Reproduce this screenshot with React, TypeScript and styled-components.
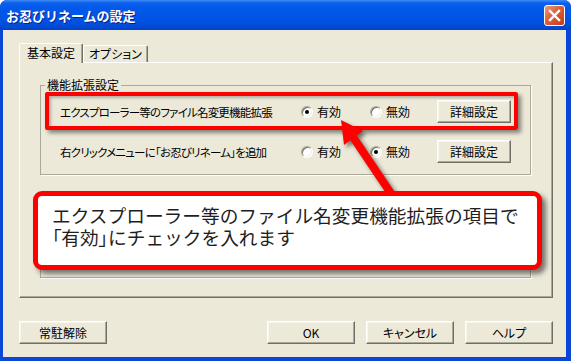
import React from "react";
import styled, { createGlobalStyle } from "styled-components";

const GlobalStyle = createGlobalStyle`
  html, body {
    margin: 0;
    padding: 0;
    background: #ffffff;
  }
  * {
    box-sizing: border-box;
  }
`;

const uiFont = `"Noto Sans CJK JP", "Noto Sans", sans-serif`;

export const Window = styled.div`
  position: relative;
  width: 571px;
  height: 361px;
  display: flex;
  flex-direction: column;
  background: #0b47d6;
  border-radius: 7px 7px 0 0;
  overflow: hidden;
  font-family: ${uiFont};
`;

export const TitleBar = styled.div`
  height: 30px;
  display: flex;
  align-items: center;
  padding: 0 6px 0 6px;
  background: linear-gradient(
    to bottom,
    #3d8df5 0px,
    #0b5fec 3px,
    #0058e9 10px,
    #0054e3 20px,
    #004bd8 26px,
    #0042c6 30px
  );
`;

export const TitleText = styled.div`
  color: #ffffff;
  font-size: 13px;
  font-weight: bold;
  letter-spacing: 0;
  text-shadow: 1px 1px 0 #0a1e8c;
`;

export const CloseBtn = styled.div`
  margin-left: auto;
  width: 21px;
  height: 21px;
  border: 1px solid #ffffff;
  border-radius: 3px;
  background: linear-gradient(135deg, #ec9a7c 0%, #dd5f37 45%, #c23c16 100%);
  display: flex;
  align-items: center;
  justify-content: center;
`;

export const Client = styled.div`
  flex: 1;
  margin: 0 5px 4px 3px;
  background: #ece9d8;
  padding: 13px 13px 13px 16px;
  display: flex;
  flex-direction: column;
`;

export const TabStrip = styled.div`
  display: flex;
  align-items: flex-end;
  height: 20px;
  margin-bottom: -1px;
  position: relative;
  z-index: 1;
`;

export const Tab = styled.div<{ $active?: boolean }>`
  height: ${(p) => (p.$active ? "20px" : "17px")};
  margin-bottom: ${(p) => (p.$active ? "0" : "1px")};
  padding: ${(p) => (p.$active ? "1px 7px 0 7px" : "0 5px 0 5px")};
  background: #ece9d8;
  border-top: 1px solid #ffffff;
  border-left: 1px solid #ffffff;
  border-right: 1px solid #716f64;
  box-shadow: inset -1px 0 0 #aca899;
  border-radius: 2px 2px 0 0;
  font-size: 12px;
  line-height: 16px;
  color: #000000;
  font-feature-settings: "palt";
`;

export const Panel = styled.div`
  flex: 1;
  display: flex;
  flex-direction: column;
  border: 1px solid;
  border-color: #ffffff #716f64 #716f64 #ffffff;
  box-shadow: inset -1px -1px 0 #aca899;
  padding: 14px 21px 19px 20px;
`;

export const Group = styled.fieldset<{ $grow?: boolean }>`
  margin: 0;
  border: 1px solid #aca899;
  box-shadow: 1px 1px 0 #ffffff;
  padding: 0;
  min-width: 0;
  ${(p) => (p.$grow ? "flex: 1; margin-top: 19px;" : "")}
`;

export const Legend = styled.legend`
  margin-left: 4px;
  padding: 0 2px;
  font-size: 12px;
  line-height: 16px;
  color: #000000;
`;

export const Rows = styled.div`
  display: flex;
  flex-direction: column;
  gap: 17px;
  padding: 7px 19px 11px 19px;
`;

export const Row = styled.div`
  display: grid;
  grid-template-columns: 1fr 69px 67px 74px;
  align-items: center;
  height: 23px;
  font-size: 12px;
  color: #000000;
`;

export const RowLabel = styled.span`
  font-size: 11.5px;
  letter-spacing: -0.8px;
  font-feature-settings: "palt";
  white-space: nowrap;
`;

export const RadioOption = styled.label`
  display: flex;
  align-items: center;
  gap: 4px;
`;

export const RadioCircle = styled.span<{ $checked?: boolean }>`
  position: relative;
  width: 12px;
  height: 12px;
  border-radius: 50%;
  background: #ffffff;
  border: 1px solid;
  border-color: #aca899 #ffffff #ffffff #aca899;
  box-shadow: inset 1px 1px 0 #716f64, inset -1px -1px 0 #f1efe2;
  &::after {
    content: "";
    display: ${(p) => (p.$checked ? "block" : "none")};
    position: absolute;
    left: 3px;
    top: 3px;
    width: 4px;
    height: 4px;
    border-radius: 50%;
    background: #000000;
  }
`;

export const Button = styled.div<{ $w?: number }>`
  width: ${(p) => p.$w ?? 74}px;
  height: 23px;
  display: flex;
  align-items: center;
  justify-content: center;
  background: #ece9d8;
  border: 1px solid;
  border-color: #ffffff #716f64 #716f64 #ffffff;
  box-shadow: inset -1px -1px 0 #aca899, inset 1px 1px 0 #f6f5ee;
  font-size: 12px;
  color: #000000;
  font-feature-settings: "palt";
`;

export const ButtonBar = styled.div`
  display: flex;
  align-items: center;
  margin-top: 23px;
  gap: 11px;
`;

export const Spacer = styled.div`
  flex: 1;
`;

export const Highlight = styled.div`
  position: absolute;
  left: 45px;
  top: 92px;
  width: 473px;
  height: 38px;
  border: 4px solid #ff0000;
  border-radius: 2px;
  box-shadow: 3px 3px 4px rgba(0, 0, 0, 0.45),
    inset 2px 2px 3px rgba(0, 0, 0, 0.25);
  z-index: 5;
`;

export const ArrowLayer = styled.svg`
  position: absolute;
  left: 0;
  top: 0;
  width: 571px;
  height: 361px;
  pointer-events: none;
  filter: drop-shadow(3px 3px 2px rgba(0, 0, 0, 0.5));
  z-index: 6;
`;

export const Callout = styled.div`
  position: absolute;
  left: 33px;
  top: 191px;
  width: 509px;
  height: 79px;
  border: 5px solid #ff0000;
  border-radius: 9px;
  background: #ffffff;
  box-shadow: 4px 4px 5px rgba(0, 0, 0, 0.5);
  padding: 8px 0 0 14px;
  font-size: 18.7px;
  line-height: 22px;
  color: #1e1e1e;
  white-space: nowrap;
  z-index: 7;
`;

export const Quote = styled.span`
  font-feature-settings: "palt";
`;

type RowInfo = { label: string; on: boolean };

const rows: RowInfo[] = [
  { label: "エクスプローラー等のファイル名変更機能拡張", on: true },
  { label: "右クリックメニューに「お忍びリネーム」を追加", on: false },
];

const SettingRow: React.FC<RowInfo> = ({ label, on }) => (
  <Row>
    <RowLabel>{label}</RowLabel>
    <RadioOption>
      <RadioCircle $checked={on} />
      有効
    </RadioOption>
    <RadioOption>
      <RadioCircle $checked={!on} />
      無効
    </RadioOption>
    <Button>詳細設定</Button>
  </Row>
);

export default function App() {
  return (
    <>
      <GlobalStyle />
      <Window>
        <TitleBar>
          <TitleText>お忍びリネームの設定</TitleText>
          <CloseBtn>
            <svg width="13" height="13" viewBox="0 0 13 13">
              <path
                d="M2 2 L11 11 M11 2 L2 11"
                stroke="#ffffff"
                strokeWidth="2.4"
                strokeLinecap="square"
              />
            </svg>
          </CloseBtn>
        </TitleBar>
        <Client>
          <TabStrip>
            <Tab $active>基本設定</Tab>
            <Tab>オプション</Tab>
          </TabStrip>
          <Panel>
            <Group>
              <Legend>機能拡張設定</Legend>
              <Rows>
                {rows.map((r) => (
                  <SettingRow key={r.label} label={r.label} on={r.on} />
                ))}
              </Rows>
            </Group>
            <Group $grow />
          </Panel>
          <ButtonBar>
            <Button $w={88}>常駐解除</Button>
            <Spacer />
            <Button $w={88}>OK</Button>
            <Button $w={88}>キャンセル</Button>
            <Button $w={88}>ヘルプ</Button>
          </ButtonBar>
        </Client>

        <Highlight />
        <ArrowLayer viewBox="0 0 571 361">
          <line
            x1="353"
            y1="137"
            x2="394"
            y2="198"
            stroke="#ff0000"
            strokeWidth="8"
          />
          <polygon points="341,120 363,131 344,145" fill="#ff0000" />
        </ArrowLayer>
        <Callout>
          エクスプローラー等のファイル名変更機能拡張の項目で
          <br />
          <Quote>「有効」</Quote>にチェックを入れます
        </Callout>
      </Window>
    </>
  );
}
